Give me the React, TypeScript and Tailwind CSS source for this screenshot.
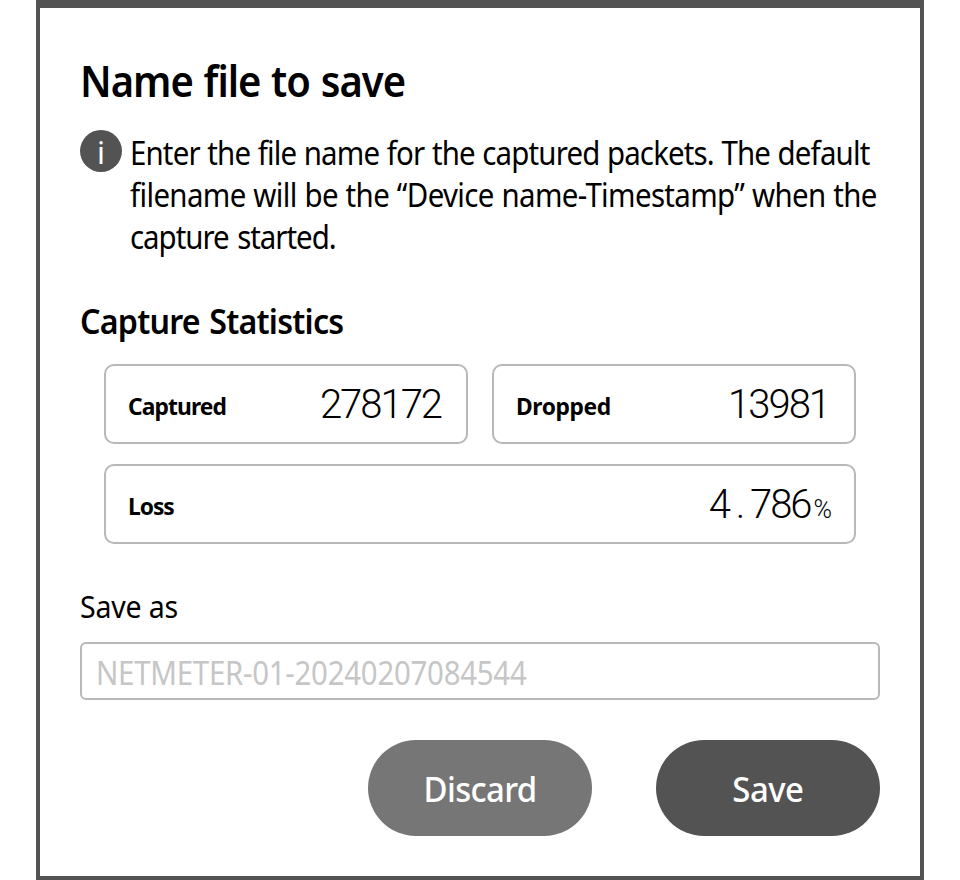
import type { ReactNode } from "react";

type StatProps = { label: string; tracking: string; className?: string; valueClass?: string; children: ReactNode };

function Stat({ label, tracking, className = "", valueClass = "", children }: StatProps) {
  return (
    <div className={`flex h-20 justify-between rounded-[10px] border-2 border-[#b8b8b8] px-[22px] ${className}`}>
      <span className={`origin-left scale-x-[0.95] pt-[22px] text-[24px] leading-9 font-bold ${tracking}`}>{label}</span>
      <span className={`pt-[15px] font-[Roboto,sans-serif] text-[40px] leading-[48px] font-light tracking-[-2px] ${valueClass}`}>
        {children}
      </span>
    </div>
  );
}

export default function App() {
  return (
    <div className="h-[880px] bg-white px-9 font-['Noto_Sans','Open_Sans',sans-serif] text-black">
      <main className="flex h-[880px] flex-col border-x-4 border-t-8 border-b-4 border-[#535353] px-10">
        <h1 className="mt-[43px] h-[60px] origin-left scale-x-[0.93] text-[43px] leading-[60px] font-semibold tracking-[-1.1px] [word-spacing:1.5px] whitespace-nowrap">
          Name file to save
        </h1>
        <div className="mt-[19px] flex h-[128px] gap-2">
          <span className="flex size-[42px] shrink-0 justify-center rounded-full bg-[#535353] text-[31px] leading-[45px] text-white">
            i
          </span>
          <p className="mt-0.5 origin-left scale-x-[0.92] text-[32px] leading-[42px] whitespace-nowrap">
            <span className="block tracking-[-0.92px] [word-spacing:0.8px]">Enter the file name for the captured packets. The default</span>
            <span className="block tracking-[-0.7px] [word-spacing:0.8px]">filename will be the “Device name-Timestamp” when the</span>
            <span className="block tracking-[-1.1px] [word-spacing:2px]">capture started.</span>
          </p>
        </div>
        <h2 className="mt-[37px] h-[53px] origin-left scale-x-[0.92] text-[35px] leading-[52px] font-semibold tracking-[-0.85px] [word-spacing:2px]">
          Capture Statistics
        </h2>
        <div className="mx-6 mt-4 grid grid-cols-2 gap-x-6 gap-y-5">
          <Stat label="Captured" tracking="tracking-[-0.95px]" valueClass="pr-[3px]">278172</Stat>
          <Stat label="Dropped" tracking="tracking-[-0.4px]" valueClass="pr-[3px]">13981</Stat>
          <Stat label="Loss" tracking="tracking-[-1.1px]" className="col-span-2">
            4<span className="inline-block w-[21px] text-center">.</span>786
            <span className="ml-[3px] text-[25px] tracking-normal">%</span>
          </Stat>
        </div>
        <label className="mt-10 h-11 origin-left scale-x-[0.92] text-[31px] leading-[44px] tracking-[-0.2px]">Save as</label>
        <div className="mt-[14px] h-[58px] rounded-md border-2 border-[#b8b8b8] pl-[14px] text-[32px] leading-[57px] text-[#c6c6c6]">
          <span className="inline-block origin-left scale-x-[0.92] tracking-[-0.3px]">NETMETER-01-20240207084544</span>
        </div>
        <div className="mt-10 flex justify-end gap-16 text-[35px] font-medium text-white">
          <button className="h-24 w-56 rounded-full bg-[#767676] pt-0.5">
            <span className="inline-block scale-x-[0.94] tracking-[-0.7px]">Discard</span>
          </button>
          <button className="h-24 w-56 rounded-full bg-[#535353] pt-0.5">
            <span className="inline-block scale-x-[0.94] tracking-[-0.5px]">Save</span>
          </button>
        </div>
      </main>
    </div>
  );
}
